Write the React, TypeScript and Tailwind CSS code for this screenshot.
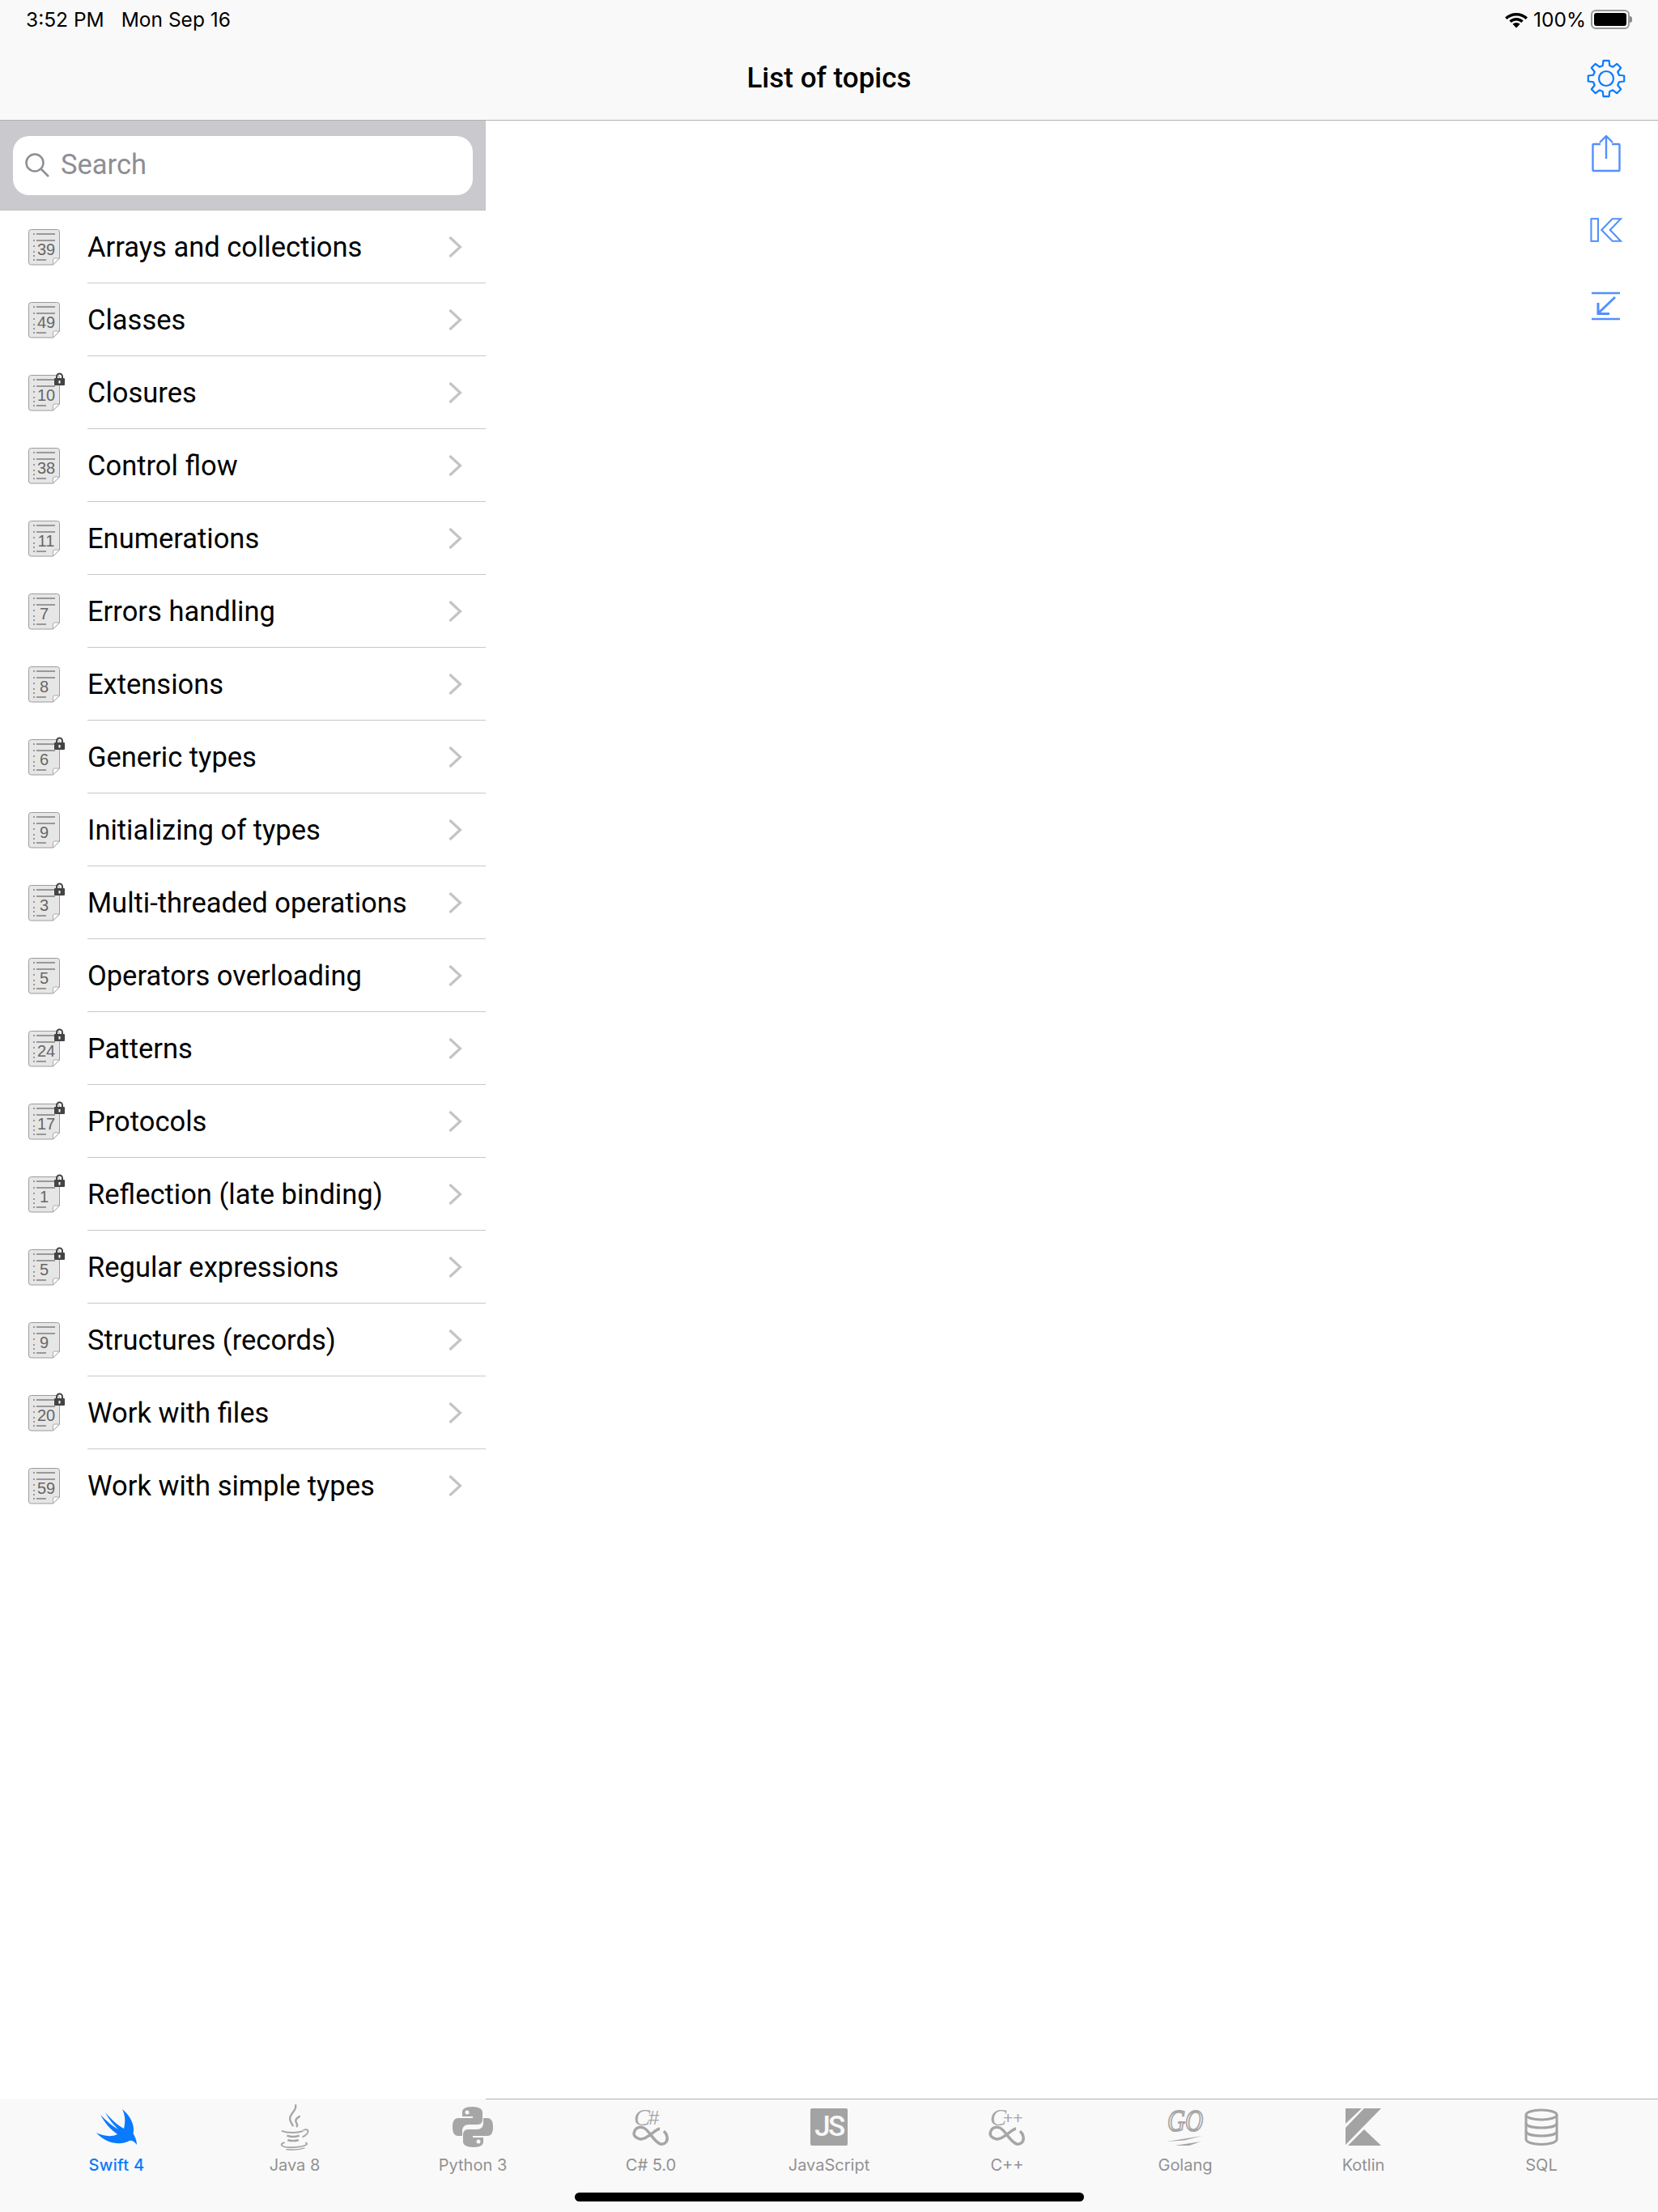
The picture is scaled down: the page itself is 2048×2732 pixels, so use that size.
import React from 'react';

const topics = [
  { name: 'Arrays and collections', count: 39 },
  { name: 'Classes', count: 49 },
  { name: 'Closures', count: 10, locked: true },
  { name: 'Control flow', count: 38 },
  { name: 'Enumerations', count: 11 },
  { name: 'Errors handling', count: 7 },
  { name: 'Extensions', count: 8 },
  { name: 'Generic types', count: 6, locked: true },
  { name: 'Initializing of types', count: 9 },
  { name: 'Multi-threaded operations', count: 3, locked: true },
  { name: 'Operators overloading', count: 5 },
  { name: 'Patterns', count: 24, locked: true },
  { name: 'Protocols', count: 17, locked: true },
  { name: 'Reflection (late binding)', count: 1, locked: true },
  { name: 'Regular expressions', count: 5, locked: true },
  { name: 'Structures (records)', count: 9 },
  { name: 'Work with files', count: 20, locked: true },
  { name: 'Work with simple types', count: 59 },
];

function DocIcon({ count, locked }: { count: number; locked?: boolean }) {
  return (
    <svg width="48" height="50" viewBox="0 0 48 50" className="shrink-0">
      <path d="M3.500 3.500h32a3 3 0 0 1 3 3V39l-8 8h-27a3 3 0 0 1-3-3V6.500a3 3 0 0 1 3-3z" fill="#e6e6e6" stroke="#9c9c9c" />
      <path d="M30.500 47v-6a2 2 0 0 1 2-2h6z" fill="#fff" stroke="#aaa" />
      <path d="M10 9h23M10 17h23M10 41h12" stroke="#999" strokeWidth="2" />
      <path d="M6 9h2M6 17h2M6 24h2M6 31h2M6 36h2M6 41h2" stroke="#999" strokeWidth="2" />
      <text x={count > 9 ? 22 : 19.5} y="35" textAnchor="middle" fontFamily="Liberation Sans, sans-serif" fontSize="20" fill="#666">
        {count}
      </text>
      {locked && (
        <g>
          <path d="M35 9V5a3.500 3.500 0 0 1 7 0v4" fill="none" stroke="#444" strokeWidth="2" />
          <rect x="32" y="7" width="13" height="9" fill="#444" rx="1" />
          <rect x="37.500" y="10" width="2" height="3.500" fill="#fff" />
        </g>
      )}
    </svg>
  );
}

function Chevron() {
  return (
    <svg width="18" height="28" viewBox="0 0 18 28" fill="none" stroke="#c4c4c7" strokeWidth="3.200" className="shrink-0">
      <path d="M2.500 2L15.500 14 2.500 26" />
    </svg>
  );
}

function Gear() {
  const teeth = [0, 45, 90, 135, 180, 225, 270, 315];
  const pts: string[] = [];
  teeth.forEach((a) => {
    const p = (r: number, d: number) => {
      const t = ((a + d - 90) * Math.PI) / 180;
      return `${(24 + r * Math.cos(t)).toFixed(2)} ${(24 + r * Math.sin(t)).toFixed(2)}`;
    };
    pts.push(p(16.5, -15), p(22.5, -9), p(22.5, 9), p(16.5, 15));
  });
  return (
    <svg width="48" height="48" viewBox="0 0 48 48" fill="none" stroke="#0a7aff" strokeWidth="2.200" strokeLinejoin="round">
      <path d={`M${pts.join('L')}Z`} />
      <circle cx="24" cy="24" r="9" />
    </svg>
  );
}

function ShareIcon() {
  return (
    <svg width="36" height="46" viewBox="0 0 36 46" fill="none" stroke="#5390fb" strokeWidth="2.400">
      <path d="M11 11H2.500a1 1 0 0 0-1 1v31a1 1 0 0 0 1 1h31a1 1 0 0 0 1-1V12a1 1 0 0 0-1-1H25" />
      <path d="M18 29V2M10 9l8-8 8 8" />
    </svg>
  );
}

function CollapseIcon() {
  return (
    <svg width="40" height="32" viewBox="0 0 42 32" fill="none" stroke="#5390fb" strokeWidth="2.200">
      <rect x="1.500" y="1.500" width="9" height="29" />
      <path d="M40 1.500H29L15 16l14 14.500h11L26 16z" />
    </svg>
  );
}

function DownloadIcon() {
  return (
    <svg width="36" height="36" viewBox="0 0 36 36" fill="none" stroke="#5390fb">
      <path d="M0 2h35M0 34h35" strokeWidth="2.400" />
      <path d="M29 7L8 27" strokeWidth="3" />
      <path d="M8 14v13.500h14" strokeWidth="3" />
    </svg>
  );
}

function SwiftIcon() {
  return (
    <svg width="50" height="44" viewBox="0 0 50 44" fill="#0a7aff">
      <path d="M32 0C42 8 48 20 45.500 30C48 34 50 39 50 44C47 40 44 38 41 39C33 44 14 45 0 29C8 33 18 35 26 31C17 25 10 16 5 7C12 14 20 21 27 25C21 19 15 12 11 4C18 12 26 20 34 24C36 16 36 8 32 0Z" />
    </svg>
  );
}

function JavaIcon() {
  return (
    <svg width="44" height="58" viewBox="0 0 46 60" fill="none" stroke="#a6a6a6">
      <path d="M24 1c3 8-9 12-7 20 1 3 3 6 4 8" strokeWidth="2.500" />
      <path d="M30 16c-6 3-7 6-4 10 1 2 0 3-1 4" strokeWidth="2.500" />
      <path d="M6 35c8 3 20 3 28 0" strokeWidth="2" />
      <path d="M34 34c8-3 9 4-1 9" strokeWidth="2" />
      <path d="M13 41c5 2 11 2 16 0M14 47c4 1 10 1 14 0" strokeWidth="2.500" />
      <path d="M10 50c-7 2-4 5 2 6 8 1 20 0 26-3 1-1 1-2-1-3" strokeWidth="2" />
      <path d="M12 59c8 1 18 0 24-2" strokeWidth="1.500" />
    </svg>
  );
}

function PythonIcon() {
  return (
    <svg width="50" height="50" viewBox="0 0 50 50" fill="#a6a6a6">
      <path d="M24 0c-9 0-12 3-12 7v5h13v2H7c-5 0-7 4-7 11s2 11 7 11h5v-6c0-5 3-8 8-8h11c4 0 6-3 6-6V7c0-4-4-7-13-7z" />
      <path d="M26 50c9 0 12-3 12-7v-5H25v-2h18c5 0 7-4 7-11s-2-11-7-11h-5v6c0 5-3 8-8 8H19c-4 0-6 3-6 6v9c0 4 4 7 13 7z" />
      <circle cx="18" cy="7" r="2.500" fill="#f9f9f9" />
      <circle cx="32" cy="43" r="2.500" fill="#f9f9f9" />
    </svg>
  );
}

function InfinityMark({ suffix }: { suffix: string }) {
  const isSharp = suffix === '#';
  return (
    <svg width="44" height="48" viewBox="0 0 44 48" fill="none" stroke="#a6a6a6" className="overflow-visible">
      <text y="22" fill="#a6a6a6" stroke="none" fontFamily="Liberation Serif, serif" fontStyle="italic">
        <tspan x="1" fontSize="30">C</tspan>
        <tspan x={isSharp ? 19 : 17} y={isSharp ? 21 : 20} fontSize={isSharp ? 24 : 21} fontFamily="Liberation Sans, sans-serif" fontStyle="normal">{suffix}</tspan>
      </text>
      <path d="M33 26C27 27 17 40 9 39C3 38 0 34 1.500 30C3 25 8 23 13 25C20 28 26 43 34 45C40 46 43 41 42 36C41.500 33 40 31 38 29" strokeWidth="3.500" />
    </svg>
  );
}

function JsIcon() {
  return (
    <div className="flex h-[46px] w-[46px] items-center justify-center rounded-[2px] bg-[#a3a3a3] font-['Roboto',sans-serif] text-[35px] leading-[46px] font-medium tracking-[-2.5px] text-[#f9f9f9]">
      JS
    </div>
  );
}

function GoIcon() {
  return (
    <svg width="46" height="46" viewBox="0 0 46 46" fill="#a6a6a6" className="overflow-visible">
      <text x="1" y="28" textLength="44" lengthAdjust="spacingAndGlyphs" fontFamily="Liberation Serif, serif" fontStyle="italic" fontSize="38" fill="none" stroke="#a6a6a6" strokeWidth="2">GO</text>
      <path d="M0 41l44-7-22 5.500zM10 46l32-5-14 5z" />
    </svg>
  );
}

function KotlinIcon() {
  return (
    <svg width="44" height="46" viewBox="0 0 44 46" fill="#a3a3a3">
      <path d="M0 0h20L0 19z" />
      <path d="M23 0h21L1 44l-1 1V24z" />
      <path d="M23 26l21 20H3z" />
    </svg>
  );
}

function SqlIcon() {
  return (
    <svg width="42" height="46" viewBox="0 0 42 46" fill="none" stroke="#a3a3a3" strokeWidth="3">
      <ellipse cx="21" cy="8" rx="19" ry="6" />
      <path d="M2 8v30c0 4 9 6.500 19 6.500s19-2.500 19-6.500V8" />
      <path d="M2 18c0 4 9 6 19 6s19-2 19-6M2 28c0 4 9 6 19 6s19-2 19-6" />
    </svg>
  );
}

const tabs = [
  { label: 'Swift 4', icon: <SwiftIcon />, active: true },
  { label: 'Java 8', icon: <JavaIcon /> },
  { label: 'Python 3', icon: <PythonIcon /> },
  { label: 'C# 5.0', icon: <InfinityMark suffix="#" /> },
  { label: 'JavaScript', icon: <JsIcon /> },
  { label: 'C++', icon: <InfinityMark suffix="++" /> },
  { label: 'Golang', icon: <GoIcon /> },
  { label: 'Kotlin', icon: <KotlinIcon /> },
  { label: 'SQL', icon: <SqlIcon /> },
];

export default function App() {
  return (
    <div className="flex h-[2732px] w-[2048px] flex-col overflow-hidden bg-white font-['Inter',sans-serif] text-black">
      {/* Status + nav bar */}
      <header className="flex h-[149px] shrink-0 flex-col border-b border-[#b2b2b2] bg-[#f9f9f9]">
        <div className="flex h-[48px] items-center justify-between px-[32px] text-[24.5px]">
          <div className="flex gap-[21px]">
            <span>3:52 PM</span>
            <span>Mon Sep 16</span>
          </div>
          <div className="flex items-center gap-[6px]">
            <svg width="30" height="24" viewBox="0 0 30 24" fill="#000">
              <path d="M15 4C9.500 4 4.500 6 1 9.500l2.500 2.500C6.500 9 10.500 7.500 15 7.500s8.500 1.500 11.500 4.500L29 9.500C25.500 6 20.500 4 15 4z" />
              <path d="M15 10c-3.500 0-6.500 1.300-8.700 3.500l2.500 2.500c1.600-1.500 3.800-2.500 6.200-2.500s4.600 1 6.200 2.500l2.500-2.500C21.500 11.300 18.500 10 15 10z" />
              <path d="M15 16c-1.800 0-3.400.7-4.500 1.800L15 22.500l4.500-4.700C18.400 16.700 16.800 16 15 16z" />
            </svg>
            <span>100%</span>
            <div className="flex items-center">
              <div className="h-[24px] w-[48px] rounded-[6px] border-2 border-[#9a9a9a] p-[2px]">
                <div className="h-full w-full rounded-[3px] bg-black" />
              </div>
              <div className="h-[8px] w-[3px] rounded-r-full bg-[#8a8a8a]" />
            </div>
          </div>
        </div>
        <div className="grid flex-1 grid-cols-[1fr_auto_1fr] items-center px-[40px] pb-[2px]">
          <div />
          <h1 className="font-['Roboto',sans-serif] text-[35px] font-medium">List of topics</h1>
          <div className="justify-self-end">
            <Gear />
          </div>
        </div>
      </header>

      <div className="flex min-h-0 flex-1">
        {/* Sidebar */}
        <aside className="flex w-[600px] shrink-0 flex-col font-['Roboto',sans-serif]">
          <div className="h-[111px] border-b border-[#c0c0c2] bg-[#c9c9ce] px-[16px] pt-[19px]">
            <div className="flex h-[73px] items-center rounded-[20px] bg-white pb-[2px] pl-[14px] text-[34.5px] text-[#8e8e93]">
              <svg width="32" height="32" viewBox="0 0 32 32" fill="none" stroke="#8e8e93" strokeWidth="2.500" className="mr-[13px]">
                <circle cx="13" cy="13" r="10.500" />
                <path d="M20.500 20.500L30 30" />
              </svg>
              Search
            </div>
          </div>
          <div className="flex flex-col">
            {topics.map((t, i) => (
              <div key={t.name} className="flex h-[90px] items-center pl-[35px]">
                <DocIcon count={t.count} locked={t.locked} />
                <div className={`ml-[25px] flex h-full flex-1 items-center justify-between pr-[29px] ${i < topics.length - 1 ? 'border-b border-[#c8c7cc]' : ''}`}>
                  <span className="pt-[2px] text-[34.5px]">{t.name}</span>
                  <Chevron />
                </div>
              </div>
            ))}
          </div>
        </aside>

        {/* Empty detail pane with toolbar */}
        <main className="flex flex-1 flex-col items-end pt-[18px] pr-[40px]">
          <div className="flex w-[48px] flex-col items-center">
            <ShareIcon />
            <div className="mt-[55px]">
              <CollapseIcon />
            </div>
            <div className="mt-[60px]">
              <DownloadIcon />
            </div>
          </div>
        </main>
      </div>

      {/* Tab bar */}
      <nav className="relative flex h-[140px] shrink-0 bg-[#f9f9f9] px-[34px]">
        <div className="absolute top-0 right-0 left-[600px] h-px bg-[#b2b2b2]" />
        {tabs.map((t) => (
          <div key={t.label} className="flex w-[220px] flex-col items-center pt-[4px]">
            <div className="flex h-[62px] items-center justify-center">{t.icon}</div>
            <span className={`mt-[1px] text-[20px] ${t.active ? 'font-medium tracking-[0.3px] text-[#0a7aff]' : 'text-[#929292]'}`}>{t.label}</span>
          </div>
        ))}
        <div className="absolute bottom-[13px] left-[710px] h-[11px] w-[629px] rounded-full bg-black" />
      </nav>
    </div>
  );
}
